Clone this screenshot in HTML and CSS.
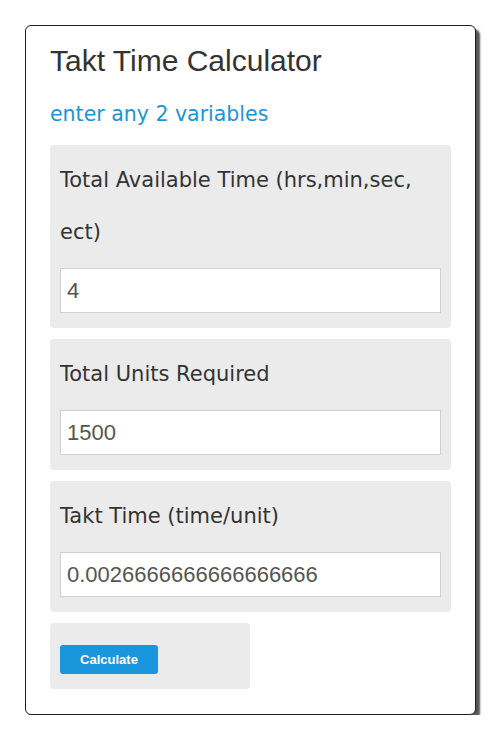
FILE: index.html
```html
<!DOCTYPE html>
<html>
<head>
<meta charset="utf-8">
<link rel="stylesheet" href="styles.css">
</head>
<body>
<div class="card">
  <h1 class="title">Takt Time Calculator</h1>
  <p class="hint">enter any 2 variables</p>
  <div class="panel">
    <label class="label">Total Available Time (hrs,min,sec, ect)</label>
    <input class="field" type="text" value="4">
  </div>
  <div class="panel">
    <label class="label">Total Units Required</label>
    <input class="field" type="text" value="1500">
  </div>
  <div class="panel">
    <label class="label">Takt Time (time/unit)</label>
    <input class="field" type="text" value="0.0026666666666666666">
  </div>
  <div class="panel panel-btn">
    <button class="btn" type="button">Calculate</button>
  </div>
</div>
</body>
</html>
```

FILE: styles.css
```css
html, body {
  margin: 0;
  padding: 0;
  background: #ffffff;
}
body {
  padding: 25px 0 0 25px;
}
.card {
  box-sizing: border-box;
  width: 451px;
  height: 690px;
  border: 1.5px solid #1e1e1e;
  border-radius: 6px;
  box-shadow: 4px 4px 2px #555555;
  padding: 19px 24px 25px 24px;
  background: #fff;
}
.title {
  margin: 0;
  font-family: "Liberation Sans", Arial, sans-serif;
  font-weight: normal;
  font-size: 30px;
  line-height: 32px;
  color: #333333;
}
.hint {
  margin: 22px 0 16px 0;
  font-family: "DejaVu Sans", sans-serif;
  font-size: 20.5px;
  line-height: 30px;
  color: #1b95d6;
}
.panel {
  background: #ebebeb;
  border-radius: 4px;
  padding: 9px 10px 15px 10px;
  margin-bottom: 11px;
}
.label {
  display: block;
  font-family: "DejaVu Sans", sans-serif;
  font-size: 21px;
  line-height: 52px;
  color: #333333;
  margin-bottom: 10px;
}
.field {
  display: block;
  box-sizing: border-box;
  width: 100%;
  height: 45px;
  margin: 0;
  border: 1px solid #d0d0d0;
  background: #fff;
  padding: 0 6px;
  font-family: "Liberation Sans", Arial, sans-serif;
  font-size: 22px;
  color: #555555;
  outline: none;
}
.panel-btn {
  width: 200px;
  box-sizing: border-box;
  padding: 22px 10px 15px 10px;
  margin-bottom: 0;
}
.btn {
  display: block;
  width: 98px;
  height: 29px;
  border: none;
  border-radius: 3px;
  background: #1a96dc;
  color: #ffffff;
  font-family: "Liberation Sans", Arial, sans-serif;
  font-weight: bold;
  font-size: 13px;
  padding: 0;
}
```
